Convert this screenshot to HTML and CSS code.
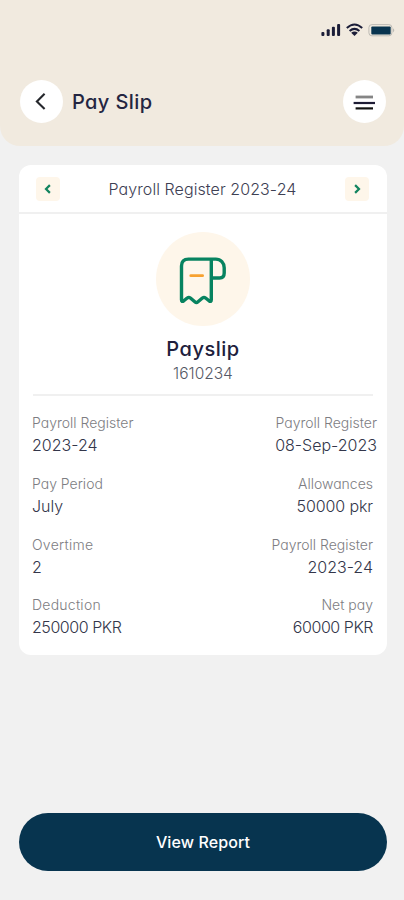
FILE: index.html
```
<!DOCTYPE html>
<html lang="en">
<head>
<meta charset="utf-8">
<title>Pay Slip</title>
<link rel="stylesheet" href="styles.css">
</head>
<body>
<header class="header">
  <div class="status">
    <svg width="76" height="16" viewBox="0 0 76 16">
      <g fill="#1b1d38">
        <rect x="1.4" y="10" width="3" height="4" rx="1"/>
        <rect x="6.7" y="7.2" width="3" height="6.8" rx="1"/>
        <rect x="11.9" y="4.7" width="3" height="9.3" rx="1"/>
        <rect x="17.1" y="2" width="3" height="12" rx="1"/>
        <path d="M31.2 10.8Q34.5 8.4 37.8 10.8L34.5 14Z"/>
      </g>
      <path d="M26.8 6.1Q34.5 -1 42.2 6.1M29.6 9Q34.5 4.8 39.4 9" fill="none" stroke="#1b1d38" stroke-width="2"/>
      <rect x="48.9" y="2.6" width="23" height="11.2" rx="3" fill="none" stroke="#bdbbb5"/>
      <path d="M73 6.2Q75.6 8 73 10.4Z" fill="#bdbbb5"/>
      <rect x="51.3" y="4.4" width="19.4" height="8" rx="1" fill="#08344f"/>
    </svg>
  </div>
  <div class="bar">
    <button class="round" aria-label="Back">
      <svg width="43" height="43" viewBox="0 0 43 43"><path d="M24.6 13.8L16.9 21.4L24.6 29" fill="none" stroke="#25272c" stroke-width="2.1"/></svg>
    </button>
    <h1 class="title">Pay Slip</h1>
    <button class="round menu" aria-label="Menu">
      <svg width="43" height="43" viewBox="0 0 43 43"><path d="M12.6 17H30" stroke="#858585" stroke-width="2.8"/><path d="M10.6 23H32" stroke="#1e1c35" stroke-width="2.2"/><path d="M12.6 28.4H30" stroke="#111" stroke-width="2.2"/></svg>
    </button>
  </div>
</header>
<main class="card">
  <div class="period">
    <button class="step" aria-label="Previous"><svg width="24" height="24" viewBox="0 0 24 24"><path d="M13.9 8.1L10 12L13.9 15.9" fill="none" stroke="#12845f" stroke-width="2.2"/></svg></button>
    <span class="period-name">Payroll Register 2023-24</span>
    <button class="step" aria-label="Next"><svg width="24" height="24" viewBox="0 0 24 24"><path d="M10.1 8.1L14 12L10.1 15.9" fill="none" stroke="#12845f" stroke-width="2.2"/></svg></button>
  </div>
  <section class="summary">
    <div class="badge">
      <svg width="94" height="94" viewBox="0 0 94 94" fill="none" stroke="#078360" stroke-width="3.4" stroke-linejoin="round" stroke-linecap="round">
        <path d="M55.3 46V67.8Q55.3 70.4 53 68.8L49.6 66Q48 64.8 46.4 66L42 69.8Q40.4 71.2 38.8 69.8L34.4 66Q32.8 64.8 31.2 66L27.8 68.8Q25.5 70.4 25.5 67.8V34Q25.5 27.1 32.5 27.1H59.8C64.8 27.1 68.2 31 68.2 35.8V41C68.2 44.2 66.4 46 63.6 46H55.3V29"/>
        <path d="M34.8 43.7H46.6" stroke="#f7a12f" stroke-width="2.8"/>
      </svg>
    </div>
    <h2 class="name">Payslip</h2>
    <p class="number">1610234</p>
  </section>
  <dl class="details">
    <div class="item"><dt>Payroll Register</dt><dd>2023-24</dd></div>
    <div class="item end wide"><dt>Payroll Register</dt><dd>08-Sep-2023</dd></div>
    <div class="item"><dt>Pay Period</dt><dd>July</dd></div>
    <div class="item end"><dt>Allowances</dt><dd class="snug">50000 pkr</dd></div>
    <div class="item"><dt class="airy">Overtime</dt><dd>2</dd></div>
    <div class="item end"><dt>Payroll Register</dt><dd>2023-24</dd></div>
    <div class="item"><dt class="airy">Deduction</dt><dd class="tight">250000 PKR</dd></div>
    <div class="item end"><dt>Net pay</dt><dd class="tight">60000 PKR</dd></div>
  </dl>
</main>
<button class="report">View Report</button>
</body>
</html>
```
FILE: styles.css
```
* { box-sizing: border-box; margin: 0; padding: 0; }
body {
  height: 900px;
  background: #f1f1f1;
  color: #3b3e4e;
  font-family: Inter, "Open Sans", sans-serif;
  font-feature-settings: "cv11";
  display: flex;
  flex-direction: column;
  overflow: hidden;
}
button { border: 0; font: inherit; font-feature-settings: inherit; }
svg { display: block; }
.header {
  height: 146px;
  background: #f1eadf;
  border-radius: 0 0 20px 20px;
  padding: 22px 8px 0 20px;
}
.status { display: flex; justify-content: flex-end; height: 58px; }
.bar { display: flex; align-items: center; padding-right: 10px; }
.round {
  width: 43px;
  height: 43px;
  border-radius: 50%;
  background: #fff;
}
.menu { margin-left: auto; }
.title {
  margin-left: 9px;
  font-size: 20px;
  font-weight: 450;
  letter-spacing: 0.4px;
  color: #242541;
}
.card {
  width: 368px;
  height: 490px;
  margin: 19px 0 0 19px;
  background: #fff;
  border-radius: 12px;
}
.period {
  height: 49px;
  padding: 0 18px 0 17px;
  display: flex;
  align-items: center;
  justify-content: space-between;
  border-bottom: 2px solid #f0f0f0;
}
.step { width: 24px; height: 24px; background: #fef6ea; border-radius: 4px; }
.period-name { font-size: 16px; line-height: 24px; font-weight: 350; letter-spacing: 0.08px; color: #3d4053; }
.summary {
  margin: 0 14px;
  height: 182px;
  padding-top: 18px;
  display: flex;
  flex-direction: column;
  align-items: center;
  border-bottom: 2px solid #f0f0f0;
}
.badge { width: 94px; height: 94px; border-radius: 50%; background: #fef6ea; }
.name { margin-top: 8px; font-size: 20px; line-height: 30px; font-weight: 450; letter-spacing: 0.5px; color: #20203c; }
.number { font-size: 15.5px; line-height: 20px; color: #555865; font-weight: 300; }
.details {
  padding: 16px 14px 0 13px;
  display: grid;
  grid-template-columns: 1fr 1fr;
  grid-auto-rows: 60.8px;
}
.end { text-align: right; }
.wide { margin-right: -4px; }
dt { font-size: 14px; line-height: 22px; font-weight: 300; color: #7d7d82; }
dd { font-size: 16px; line-height: 22px; font-weight: 350; color: #33364a; }
.airy { letter-spacing: 0.25px; }
.snug { letter-spacing: -0.1px; }
.tight { letter-spacing: -0.45px; }
.report {
  width: 368px;
  height: 58px;
  margin: 158px 0 0 19px;
  border-radius: 29px;
  background: #07344f;
  color: #fff;
  font-size: 16px;
  font-weight: 500;
  letter-spacing: 0.1px;
}
```
